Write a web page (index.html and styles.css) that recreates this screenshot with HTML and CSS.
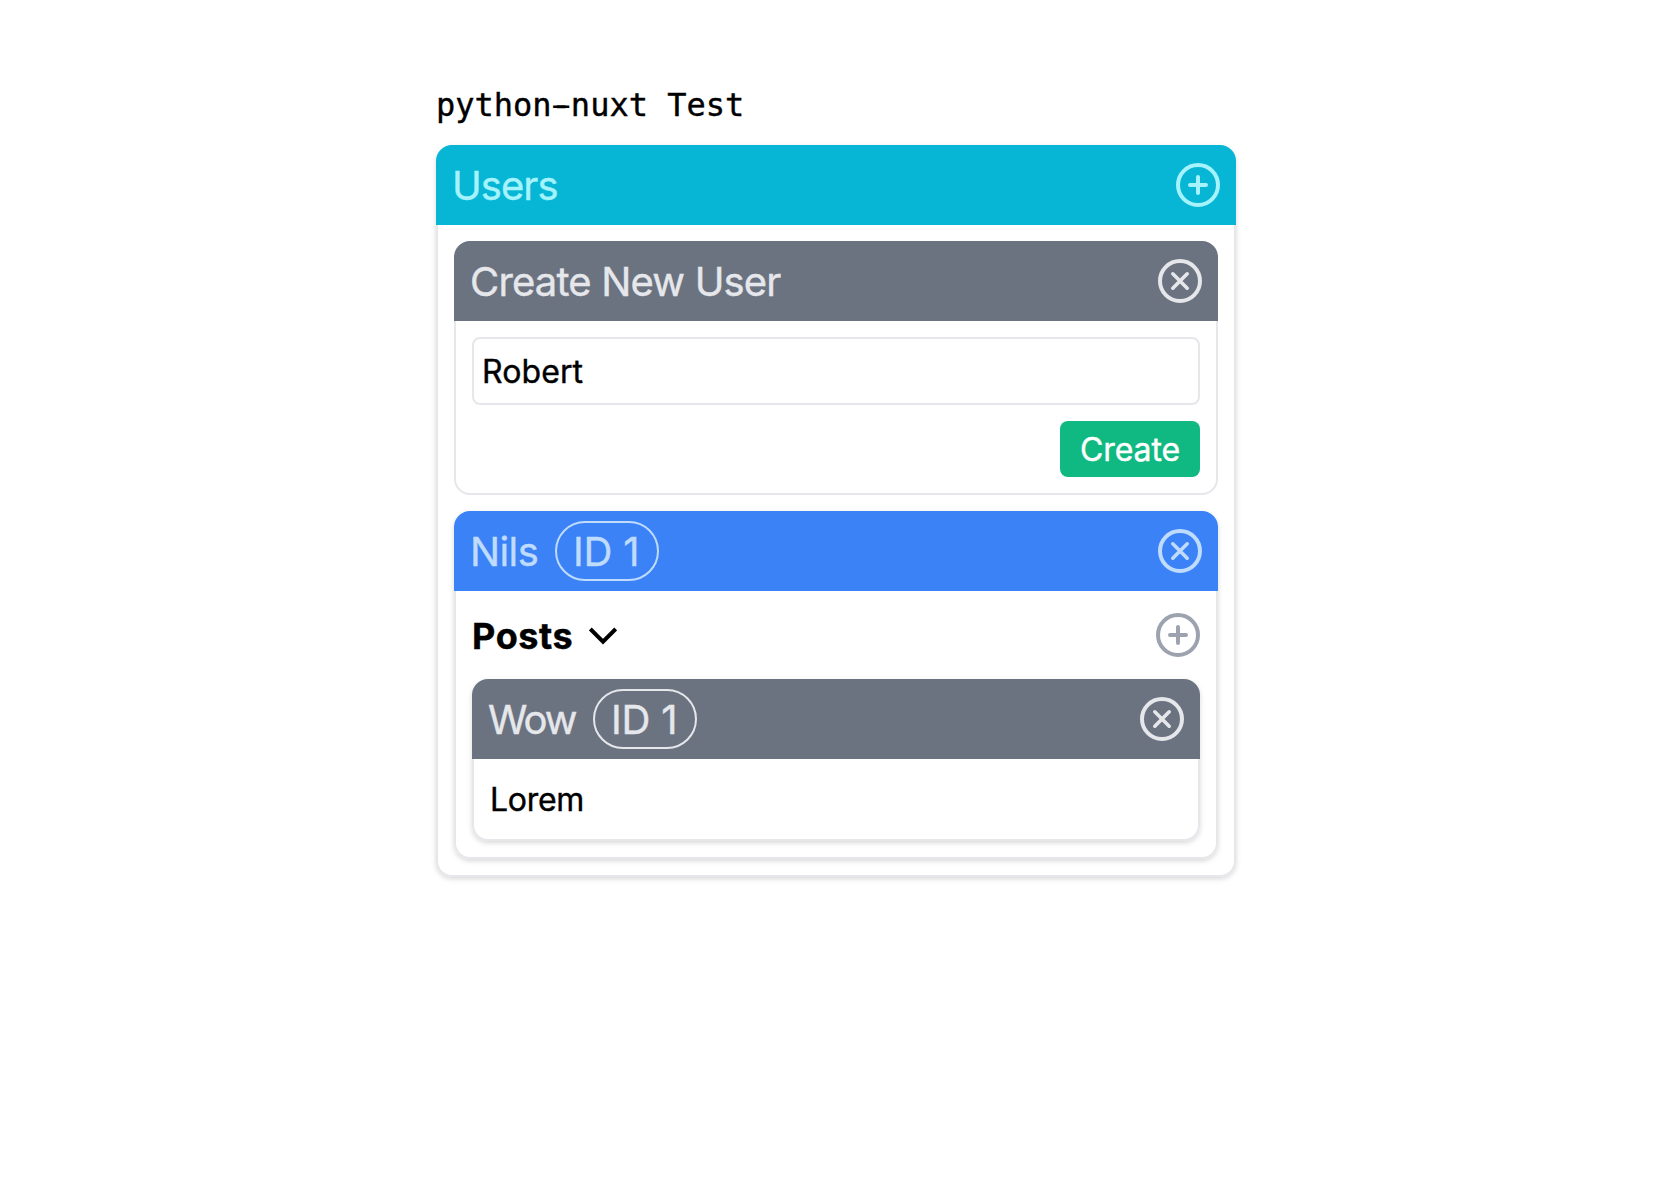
FILE: index.html
```
<!DOCTYPE html>
<html lang="en">
<head>
<meta charset="utf-8">
<title>python-nuxt Test</title>
<link rel="stylesheet" href="styles.css">
</head>
<body>
<svg class="defs" width="0" height="0">
  <symbol id="plus" viewBox="0 0 44 44"><circle cx="22" cy="22" r="20"/><path d="M22 14v16M14 22h16"/></symbol>
  <symbol id="close" viewBox="0 0 44 44"><circle cx="22" cy="22" r="20"/><path stroke-width="3.6" d="M14.800 14.800l14.400 14.400M29.200 14.800l-14.400 14.400"/></symbol>
</svg>
<main class="page">
  <h1 class="title">python<span class="dash">-</span>nuxt Test</h1>
  <section class="card raised">
    <header class="bar cyan"><span class="label">Users</span><svg class="icon"><use href="#plus"/></svg></header>
    <div class="body">
      <section class="card">
        <header class="bar gray"><span class="label form-title">Create New User</span><svg class="icon"><use href="#close"/></svg></header>
        <form class="body form">
          <input class="field" type="text" value="Robert">
          <button class="create" type="button">Create</button>
        </form>
      </section>
      <section class="card raised">
        <header class="bar blue"><span class="label name">Nils</span><span class="badge">ID 1</span><svg class="icon"><use href="#close"/></svg></header>
        <div class="body">
          <div class="posts">
            <h2 class="heading">Posts</h2>
            <svg class="chevron" viewBox="0 0 28 18"><path d="M1.300 2L14 14.700L26.700 2"/></svg>
            <svg class="icon"><use href="#plus"/></svg>
          </div>
          <article class="card raised">
            <header class="bar gray"><span class="label post">Wow</span><span class="badge">ID 1</span><svg class="icon"><use href="#close"/></svg></header>
            <div class="body"><p class="text">Lorem</p></div>
          </article>
        </div>
      </section>
    </div>
  </section>
</main>
</body>
</html>
```
FILE: styles.css
```
* { box-sizing: border-box; margin: 0; }
body { min-height: 100vh; background: #fff; color: #000; font: 400 32px/48px Inter, "Liberation Sans", sans-serif; -webkit-text-stroke-width: .4px; }
.defs { display: none; }
.page { width: 800px; margin: 0 auto; padding-top: 81px; padding-bottom: 16px; }
.title { margin-bottom: 16px; font: 400 32px/48px "DejaVu Sans Mono", monospace; }
.dash { text-shadow: 4px 0 #000, -4px 0 #000; }
.card { border-radius: 16px; }
.raised { box-shadow: 0 2px 6px rgba(0, 0, 0, .1), 0 2px 4px rgba(0, 0, 0, .06); }
.bar { display: flex; align-items: center; gap: 16px; height: 80px; padding: 0 16px; border-radius: 16px 16px 0 0; font-size: 40px; line-height: 56px; white-space: nowrap; }
.label { padding-top: 2px; letter-spacing: -.95px; }
.form-title { letter-spacing: -.83px; }
.name { width: 69px; letter-spacing: -.6px; }
.post { width: 89px; letter-spacing: -2px; }
.cyan { background: #06b6d4; color: #a5f3fc; }
.gray { background: #6b7280; color: #e5e7eb; }
.blue { background: #3b82f6; color: #bfdbfe; }
.body { display: flex; flex-direction: column; gap: 16px; padding: 16px; border: 2px solid #e5e7eb; border-top: 0; border-radius: 0 0 16px 16px; background: #fff; }
.icon { width: 44px; height: 44px; margin-left: auto; flex: none; fill: none; stroke: currentColor; stroke-width: 4; stroke-linecap: round; }
.badge { width: 104px; height: 60px; padding-left: 16px; border: 2px solid; border-radius: 30px; line-height: 58px; letter-spacing: -.2px; }
.field { width: 100%; height: 68px; padding: 0 8px; border: 2px solid #e5e7eb; border-radius: 8px; outline: 0; background: #fff; color: #000; font: inherit; letter-spacing: .1px; }
.create { align-self: flex-end; width: 140px; height: 56px; padding: 2px 0 0; border: 0; border-radius: 8px; background: #10b981; color: #fff; font: inherit; letter-spacing: -.1px; }
.posts { display: flex; align-items: center; height: 56px; }
.posts .icon { color: #9ca3af; }
.heading { width: 101px; padding-top: 2px; font-size: 36px; line-height: 56px; font-weight: 700; letter-spacing: .6px; }
.chevron { width: 28px; height: 18px; margin: 2px 0 0 16px; fill: none; stroke: currentColor; stroke-width: 4; }
.text { height: 48px; line-height: 50px; letter-spacing: -.3px; }
```
